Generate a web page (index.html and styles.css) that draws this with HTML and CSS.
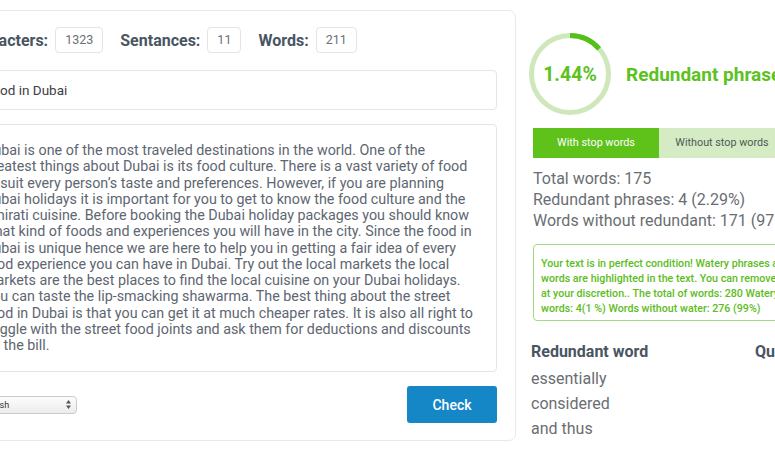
FILE: index.html
```html
<!DOCTYPE html>
<html lang="en">
<head>
<meta charset="utf-8">
<title>Redundancy checker</title>
<link rel="stylesheet" href="styles.css">
</head>
<body>
<div class="page">
  <section class="card">
    <div class="stats">
      <span class="stat-label">Characters:</span><span class="stat-box">1323</span>
      <span class="stat-label">Sentances:</span><span class="stat-box">11</span>
      <span class="stat-label">Words:</span><span class="stat-box">211</span>
    </div>
    <div class="title-input">Food in Dubai</div>
    <div class="textarea"><div class="line">Dubai is one of the most traveled destinations in the world. One of the</div><div class="line">greatest things about Dubai is its food culture. There is a vast variety of food</div><div class="line">to suit every person’s taste and preferences. However, if you are planning</div><div class="line">Dubai holidays it is important for you to get to know the food culture and the</div><div class="line">Emirati cuisine. Before booking the Dubai holiday packages you should know</div><div class="line">what kind of foods and experiences you will have in the city. Since the food in</div><div class="line">Dubai is unique hence we are here to help you in getting a fair idea of every</div><div class="line">food experience you can have in Dubai. Try out the local markets the local</div><div class="line">markets are the best places to find the local cuisine on your Dubai holidays.</div><div class="line">You can taste the lip-smacking shawarma. The best thing about the street</div><div class="line">food in Dubai is that you can get it at much cheaper rates. It is also all right to</div><div class="line">haggle with the street food joints and ask them for deductions and discounts</div><div class="line">on the bill.</div></div>
    <div class="actions">
      <div class="select"><span>English</span><svg class="arrows" width="7" height="11" viewBox="0 0 7 11"><path d="M3.5 1 L6 4.5 H1 Z M3.5 10 L6 6.5 H1 Z" fill="#555"/></svg></div>
      <button class="check">Check</button>
    </div>
  </section>
  <aside class="result">
    <div class="score">
      <svg class="ring" width="84" height="84" viewBox="0 0 84 84">
        <circle cx="42" cy="42" r="38.5" fill="none" stroke="#cfe8bb" stroke-width="5"/>
        <circle cx="42" cy="42" r="38.5" fill="none" stroke="#55c01a" stroke-width="5" stroke-dasharray="33 300" transform="rotate(-90 42 42)"/>
        <text x="42" y="49" text-anchor="middle" class="ring-text">1.44%</text>
      </svg>
      <span class="score-title">Redundant phrases</span>
    </div>
    <div class="tabs">
      <span class="tab active">With stop words</span>
      <span class="tab">Without stop words</span>
    </div>
    <div class="totals">
      <div>Total words: 175</div>
      <div>Redundant phrases: 4 (2.29%)</div>
      <div>Words without redundant: 171 (97.71%)</div>
    </div>
    <div class="notice">
      <div>Your text is in perfect condition! Watery phrases and</div>
      <div>words are highlighted in the text. You can remove them</div>
      <div>at your discretion.. The total of words: 280 Watery</div>
      <div>words: 4(1 %) Words without water: 276 (99%)</div>
    </div>
    <div class="table">
      <span class="th">Redundant word</span><span class="th">Quantity</span>
      <span class="td">essentially</span><span class="td"></span>
      <span class="td">considered</span><span class="td"></span>
      <span class="td">and thus</span><span class="td"></span>
    </div>
  </aside>
</div>
</body>
</html>
```
FILE: styles.css
```css
html, body {
  margin: 0;
  padding: 0;
  background: #ffffff;
  width: 775px;
  height: 450px;
  overflow: hidden;
  font-family: Roboto, "Liberation Sans", sans-serif;
}
.page {
  display: flex;
  align-items: flex-start;
  padding-top: 10px;
  margin-left: -48px;
  width: 1100px;
}
.card {
  box-sizing: border-box;
  width: 564px;
  flex: none;
  border: 1px solid #e7e9eb;
  border-radius: 7px;
  padding: 16px 18px 17px 18px;
  background: #fff;
}
.stats {
  display: flex;
  align-items: center;
  height: 26px;
  margin-left: -6px;
}
.stat-label {
  font-size: 16px;
  font-weight: 700;
  color: #4a5562;
  margin-right: 7px;
}
.stat-box {
  box-sizing: border-box;
  height: 26px;
  line-height: 24px;
  padding: 0 9px;
  border: 1px solid #e2e4e6;
  border-radius: 4px;
  font-size: 12.5px;
  color: #6a7078;
  margin-right: 17px;
}
.title-input {
  box-sizing: border-box;
  margin-top: 17px;
  height: 40px;
  line-height: 38px;
  border: 1px solid #e3e5e7;
  border-radius: 4px;
  padding: 0 13px;
  font-size: 13.5px;
  color: #3c4046;
}
.textarea {
  box-sizing: border-box;
  margin-top: 14px;
  height: 248px;
  border: 1px solid #e3e5e7;
  border-radius: 4px;
  padding: 17px 12px;
  font-size: 14.3px;
  line-height: 16.25px;
  color: #5e6670;
}
.line {
  white-space: pre;
}
.actions {
  margin-top: 14px;
  display: flex;
  align-items: center;
  justify-content: space-between;
  height: 37px;
}
.select {
  box-sizing: border-box;
  width: 106px;
  height: 18px;
  border: 1px solid #c9cbcd;
  border-radius: 4px;
  background: linear-gradient(#fdfdfd, #ececec);
  display: flex;
  align-items: center;
  justify-content: space-between;
  padding: 0 4px 0 8px;
  font-size: 9px;
  color: #333;
}
.check {
  width: 90px;
  height: 37px;
  border: none;
  border-radius: 3px;
  background: #1586c6;
  color: #fff;
  font-family: Roboto, "Liberation Sans", sans-serif;
  font-size: 14px;
  font-weight: 500;
}
.result {
  margin-left: 15px;
  width: 280px;
  flex: none;
  padding-top: 22px;
}
.score {
  display: flex;
  align-items: center;
  margin-left: -3px;
}
.ring {
  flex: none;
}
.ring-text {
  font-family: Roboto, "Liberation Sans", sans-serif;
  font-size: 19.5px;
  font-weight: 700;
  fill: #5cc21f;
}
.score-title {
  margin-left: 14px;
  font-size: 19px;
  font-weight: 700;
  color: #5cc21f;
  white-space: nowrap;
}
.tabs {
  display: flex;
  margin-top: 12px;
  margin-left: 2px;
}
.tab {
  width: 126px;
  height: 30px;
  line-height: 30px;
  text-align: center;
  font-size: 10.8px;
  background: #d5ebc4;
  color: #4f5a55;
  flex: none;
}
.tab.active {
  background: #5ec21b;
  color: #fff;
}
.totals {
  margin-top: 10px;
  margin-left: 2px;
  font-size: 16px;
  line-height: 21px;
  color: #6a6e72;
  white-space: nowrap;
}
.notice {
  margin-top: 13px;
  margin-left: 2px;
  box-sizing: border-box;
  width: 280px;
  height: 77px;
  border: 1.5px solid #a4da85;
  border-radius: 4px;
  padding: 11px 7px;
  font-size: 10.7px;
  line-height: 15px;
  font-weight: 500;
  color: #5cbd22;
  white-space: nowrap;
  overflow: hidden;
}
.table {
  display: grid;
  grid-template-columns: 224px auto;
  margin-top: 20px;
}
.th {
  font-size: 16px;
  font-weight: 700;
  color: #4a5562;
  line-height: 22px;
  padding-bottom: 3px;
  white-space: nowrap;
}
.td {
  font-size: 16px;
  color: #6a6e72;
  line-height: 25px;
}
```
